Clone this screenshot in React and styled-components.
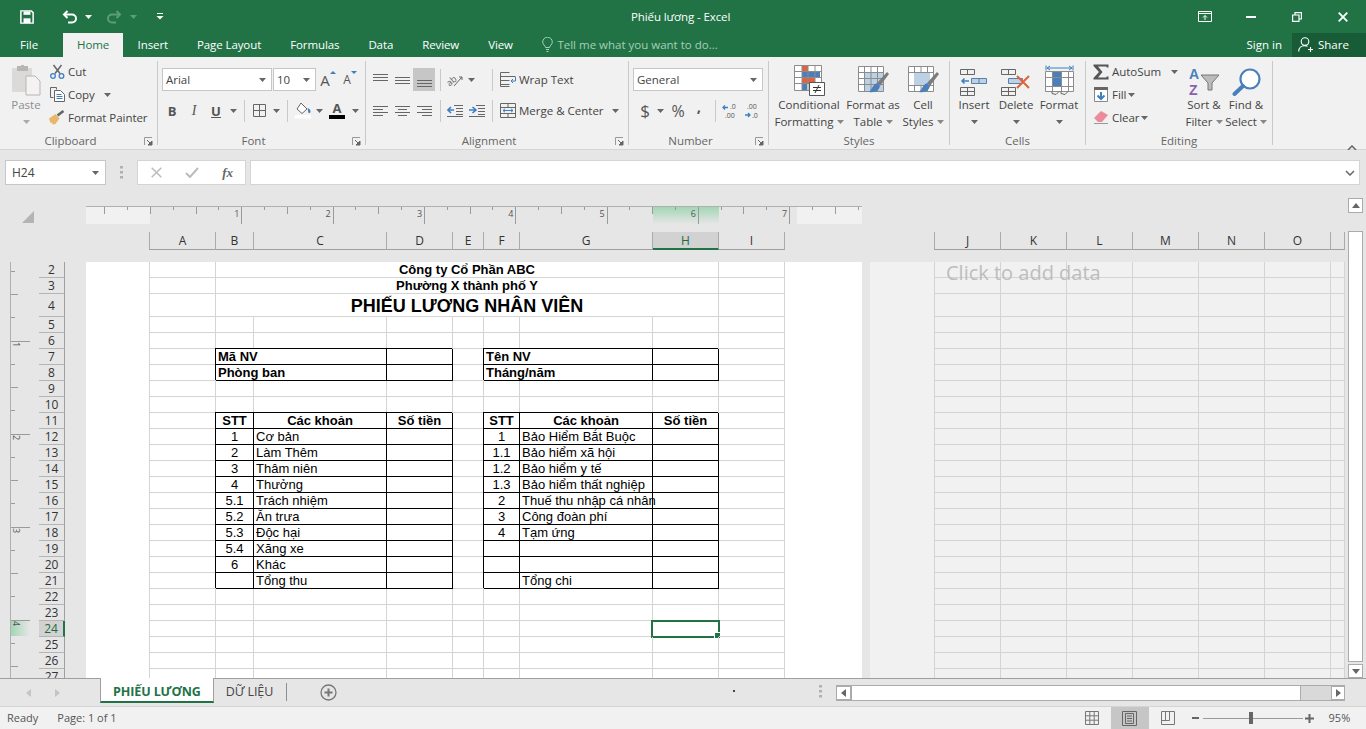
import React from "react";
import styled, { createGlobalStyle } from "styled-components";

const UI_FONT = '"Open Sans", "Noto Sans", sans-serif';
const GREEN = "#217346";

const GlobalStyle = createGlobalStyle`
  html, body { margin: 0; padding: 0; height: 100%; overflow: hidden; background: #e6e6e6; }
  body { font-family: ${UI_FONT}; }
  * { box-sizing: border-box; }
`;

const Window = styled.div`
  width: 1366px;
  height: 729px;
  display: flex;
  flex-direction: column;
  overflow: hidden;
  font-size: 12px;
  color: #444;
`;

/* ---------- title bar ---------- */
const TitleBar = styled.div`
  height: 33px;
  flex: none;
  background: ${GREEN};
  color: #fff;
  display: flex;
  align-items: center;
`;
const Qat = styled.div`
  width: 631px;
  flex: none;
  display: flex;
  align-items: center;
  padding-left: 20px;
`;
const QatSlot = styled.div`
  width: ${(p) => p.$w}px;
  margin-left: ${(p) => p.$ml || 0}px;
  flex: none;
  display: flex;
  justify-content: center;
  align-items: center;
`;
const Title = styled.div`
  width: 102px;
  flex: none;
  white-space: nowrap;
  font-size: 11.5px;
  letter-spacing: -0.1px;
`;
const WindowButtons = styled.div`
  margin-left: auto;
  display: flex;
`;
const WindowButton = styled.div`
  width: 46px;
  height: 33px;
  display: flex;
  align-items: center;
  justify-content: center;
`;

/* ---------- tabs ---------- */
const TabRow = styled.div`
  height: 24px;
  flex: none;
  background: ${GREEN};
  color: #fff;
  display: flex;
  align-items: stretch;
  font-size: 11.5px;
`;
const FileTab = styled.div`
  width: 63px;
  padding-left: 20px;
  line-height: 24px;
`;
const Tab = styled.div`
  padding: 0 ${(p) => (p.$active ? 14 : 14.5)}px;
  line-height: 23px;
  white-space: nowrap;
  letter-spacing: -0.1px;
  background: ${(p) => (p.$active ? "#f1f1f1" : "transparent")};
  color: ${(p) => (p.$active ? GREEN : "#fff")};
`;
const TellMe = styled.div`
  margin-left: 15px;
  padding-bottom: 2px;
  display: flex;
  align-items: center;
  gap: 4px;
  color: #a6cfb8;
  white-space: nowrap;
`;
const SignIn = styled.div`
  margin-left: auto;
  line-height: 23px;
  margin-right: 10px;
`;
const Share = styled.div`
  width: 74px;
  background: #185c37;
  display: flex;
  align-items: center;
  gap: 5px;
  padding: 0 0 1px 6px;
`;

/* ---------- ribbon ---------- */
const Ribbon = styled.div`
  height: 93px;
  flex: none;
  background: #f1f1f1;
  border-bottom: 1px solid #d6d6d6;
  display: flex;
  align-items: flex-start;
  padding-top: 4px;
`;
const Group = styled.div`
  width: ${(p) => p.$w}px;
  height: 84px;
  flex: none;
  display: flex;
  flex-direction: column;
  border-right: 1px solid #c8c8c8;
`;
const Body = styled.div`
  display: flex;
  margin-top: -1px;
`;
const GroupLabel = styled.div`
  position: relative;
  margin-top: auto;
  margin-bottom: -4px;
  height: 16px;
  line-height: 16px;
  text-align: center;
  font-size: 11.5px;
  color: #666;
  padding-right: ${(p) => (p.$launcher ? 16 : 0)}px;
`;
const Launcher = styled.svg`
  position: absolute;
  right: 4px;
  top: 4px;
`;
const BigButton = styled.div`
  width: ${(p) => p.$w}px;
  margin-left: ${(p) => p.$ml || 0}px;
  flex: none;
  display: flex;
  flex-direction: column;
  align-items: center;
  color: ${(p) => (p.$disabled ? "#8e8e8e" : "#444")};
`;
const BigIcon = styled.div`
  height: 36px;
  display: flex;
  align-items: flex-end;
`;
const BigLine = styled.div`
  height: 17px;
  line-height: 17px;
  white-space: nowrap;
  display: flex;
  align-items: center;
  font-size: 11.5px;
`;
const ActionCol = styled.div`
  display: flex;
  flex-direction: column;
  flex: none;
  width: ${(p) => p.$w}px;
  padding-left: ${(p) => p.$pl || 0}px;
`;
const ActionRow = styled.div`
  height: 23px;
  display: flex;
  align-items: center;
  white-space: nowrap;
  font-size: 11.5px;
  letter-spacing: -0.05px;
`;
const ActionIcon = styled.div`
  width: 20px;
  margin-right: 1px;
  flex: none;
  display: flex;
  justify-content: center;
  align-items: center;
`;
const Stack = styled.div`
  display: flex;
  flex-direction: column;
  gap: 8px;
  padding-top: 8px;
`;
const ToolRow = styled.div`
  display: flex;
  align-items: center;
  height: 23px;
  padding-left: ${(p) => p.$pl || 0}px;
`;
const Tool = styled.div`
  width: ${(p) => p.$w}px;
  height: 23px;
  flex: none;
  display: flex;
  align-items: center;
  justify-content: center;
  padding-bottom: ${(p) => p.$raise || 0}px;
  background: ${(p) => (p.$on ? "#c6c6c6" : "transparent")};
  font-family: ${(p) => (p.$serif ? '"Liberation Serif", serif' : "inherit")};
  font-weight: ${(p) => (p.$bold ? 700 : 400)};
  font-style: ${(p) => (p.$italic ? "italic" : "normal")};
  text-decoration: ${(p) => (p.$under ? "underline" : "none")};
  font-size: ${(p) => p.$fs || 12}px;
  color: #555;
`;
const Gap = styled.div`
  width: ${(p) => p.$w}px;
  flex: none;
`;
const Sep = styled.div`
  width: 1px;
  height: 22px;
  flex: none;
  background: #c8c8c8;
`;
const WideTool = styled.div`
  display: flex;
  align-items: center;
  padding-left: 7px;
  gap: 3px;
  white-space: nowrap;
  font-size: 11.5px;
`;
const Combo = styled.div`
  width: ${(p) => p.$w}px;
  height: 23px;
  margin-right: ${(p) => p.$mr || 0}px;
  flex: none;
  background: #fff;
  border: 1px solid #c6c6c6;
  display: flex;
  align-items: center;
  padding: 0 5px 0 3px;
  font-size: 11.5px;
`;
const CaretSvg = styled.svg`
  flex: none;
  margin-left: ${(p) => (p.$push ? "auto" : `${p.$ml || 0}px`)};
`;
const GrowA = styled.span`
  font-size: ${(p) => p.$fs}px;
  color: #555;
`;
const SizeArrow = styled.svg`
  flex: none;
  align-self: flex-start;
  margin-top: 3px;
`;
const Collapse = styled.div`
  margin-left: auto;
  margin-right: 9px;
  margin-top: 77px;
`;

/* ---------- formula bar ---------- */
const FormulaBar = styled.div`
  height: 56px;
  flex: none;
  background: #e6e6e6;
  display: flex;
  padding: 10px 6px 0 5px;
  align-items: flex-start;
`;
const NameBox = styled.div`
  width: 101px;
  height: 25px;
  background: #fff;
  border: 1px solid #c6c6c6;
  display: flex;
  align-items: center;
  padding: 0 6px;
  font-size: 12px;
`;
const GripBox = styled.div`
  width: 31px;
  height: 25px;
  display: flex;
  align-items: center;
  justify-content: center;
`;
const FxBox = styled.div`
  width: 109px;
  height: 25px;
  background: #fff;
  border: 1px solid #d4d4d4;
  display: flex;
  align-items: center;
  justify-content: space-between;
  padding: 0 12px 0 13px;
  margin-right: 4px;
`;
const FormulaInput = styled.div`
  flex: 1;
  height: 25px;
  background: #fff;
  border: 1px solid #d4d4d4;
  display: flex;
  align-items: center;
  justify-content: flex-end;
  padding-right: 4px;
`;
const FxText = styled.span`
  font-family: "Liberation Serif", serif;
  font-style: italic;
  font-weight: 700;
  font-size: 13px;
  color: #666;
`;

/* ---------- work area ---------- */
const Workspace = styled.div`
  flex: 1;
  min-height: 0;
  display: flex;
  background: #e6e6e6;
`;
const WorkGrid = styled.div`
  width: 1345px;
  flex: none;
  display: grid;
  grid-template-columns: 86px 776px 8px 475px;
  grid-template-rows: 26px 30px 416px;
`;
const Corner = styled.div`
  display: flex;
  padding: 5px 0 0 22px;
`;
const RulerWrap = styled.div`
  height: 18px;
`;
const HeaderStrip = styled.div`
  display: flex;
  align-items: flex-start;
  padding-left: ${(p) => p.$pl}px;
  overflow: hidden;
`;
const ColHead = styled.div`
  width: ${(p) => p.$w}px;
  height: 18px;
  flex: none;
  text-align: center;
  line-height: 17px;
  font-size: 12px;
  color: ${(p) => (p.$selected ? "#1d6b40" : "#333")};
  background: ${(p) => (p.$selected ? "#d2d2d2" : "transparent")};
  border-right: 1px solid #ababab;
  border-left: ${(p) => (p.$first ? "1px solid #ababab" : "none")};
  border-bottom: ${(p) => (p.$selected ? `2px solid ${GREEN}` : "1px solid #9f9f9f")};
`;
const LeftRail = styled.div`
  display: flex;
  overflow: hidden;
`;
const RowNumbers = styled.div`
  width: 26px;
  flex: none;
`;
const RowNumber = styled.div`
  height: ${(p) => p.$h}px;
  text-align: center;
  line-height: ${(p) => p.$h}px;
  font-size: 12px;
  color: ${(p) => (p.$selected ? "#1d6b40" : "#333")};
  background: ${(p) => (p.$selected ? "#d2d2d2" : "transparent")};
  border-bottom: 1px solid #b5b5b5;
  border-right: ${(p) => (p.$selected ? `2px solid ${GREEN}` : "1px solid #9f9f9f")};
`;
const Page = styled.div`
  background: #fff;
  overflow: hidden;
  padding-left: 63px;
`;
const SheetGrid = styled.div`
  display: grid;
  width: 636px;
  border-left: 1px solid #d4d4d4;
  grid-template-columns: ${(p) => p.$cols};
  grid-template-rows: ${(p) => p.$rows};
`;
const Cell = styled.div`
  position: relative;
  grid-column: span ${(p) => p.$span || 1};
  border-right: 1px solid ${(p) => (p.$box ? "#000" : "#d4d4d4")};
  border-bottom: 1px solid ${(p) => (p.$box ? "#000" : "#d4d4d4")};
  box-shadow: ${(p) => (p.$box ? "-1px -1px 0 #000" : "none")};
  font-family: "Liberation Sans", Arial, sans-serif;
  font-size: ${(p) => p.$fs || 13}px;
  font-weight: ${(p) => (p.$bold ? 700 : 400)};
  text-align: ${(p) => (p.$center ? "center" : "left")};
  color: #000;
  padding: 0 2px;
  line-height: ${(p) => p.$lh || 15}px;
  white-space: nowrap;
`;
const Selection = styled.div`
  position: absolute;
  left: -2px;
  top: -1px;
  right: -2px;
  bottom: -2px;
  border: 2px solid ${GREEN};
  &::after {
    content: "";
    position: absolute;
    right: -3px;
    bottom: -3px;
    width: 5px;
    height: 5px;
    background: ${GREEN};
    border: 1px solid #fff;
  }
`;
const Gutter = styled.div`
  background: #e6e6e6;
`;
const EmptyPage = styled.div`
  position: relative;
  background: #f1f1f1;
  overflow: hidden;
  padding-left: 64px;
`;
const AddData = styled.div`
  position: absolute;
  left: 76px;
  top: 0;
  font-size: 20px;
  line-height: 22px;
  color: #bdbdbd;
  white-space: nowrap;
`;
const EmptyGrid = styled.div`
  display: grid;
  grid-template-columns: 66px 66px 66px 66px 66px 66px 14px;
  grid-template-rows: ${(p) => p.$rows};
  border-left: 1px solid #d4d4d4;
`;
const EmptyCell = styled.div`
  border-right: 1px solid #d4d4d4;
  border-bottom: 1px solid #d4d4d4;
`;

/* ---------- scrollbar ---------- */
const VScroll = styled.div`
  width: 21px;
  flex: none;
  display: flex;
  flex-direction: column;
  padding: 0 3px 0;
  background: #e6e6e6;
`;
const ScrollBtn = styled.div`
  width: ${(p) => p.$w || 15}px;
  height: ${(p) => p.$h || 15}px;
  flex: none;
  margin-top: ${(p) => p.$mt || 0}px;
  background: #fff;
  border: 1px solid #ababab;
  display: flex;
  align-items: center;
  justify-content: center;
`;
const VThumb = styled.div`
  width: 15px;
  height: 432px;
  margin-top: 18px;
  background: #fff;
  border: 1px solid #ababab;
`;

/* ---------- sheet tabs ---------- */
const SheetTabs = styled.div`
  height: 28px;
  flex: none;
  background: #e6e6e6;
  border-top: 1px solid #9f9f9f;
  display: flex;
  align-items: flex-start;
`;
const TabNav = styled.div`
  width: 100px;
  height: 27px;
  flex: none;
  display: flex;
  align-items: center;
  gap: 24px;
  padding-left: 26px;
`;
const SheetTab = styled.div`
  height: ${(p) => (p.$active ? 25 : 26)}px;
  margin-top: ${(p) => (p.$active ? -1 : 0)}px;
  padding: 0 12px;
  flex: none;
  line-height: ${(p) => (p.$active ? 27 : 25)}px;
  white-space: nowrap;
  font-size: 12.5px;
  font-weight: ${(p) => (p.$active ? 700 : 400)};
  letter-spacing: -0.1px;
  color: ${(p) => (p.$active ? GREEN : "#444")};
  background: ${(p) => (p.$active ? "#fff" : "transparent")};
  border-left: ${(p) => (p.$active ? "1px solid #9f9f9f" : "none")};
  border-right: ${(p) => (p.$active ? "1px solid #9f9f9f" : "none")};
  border-bottom: ${(p) => (p.$active ? `2px solid ${GREEN}` : "none")};
`;
const TabDivider = styled.div`
  width: 1px;
  height: 18px;
  margin: 4px 0 0 1px;
  background: #8f8f8f;
  flex: none;
`;
const PlusWrap = styled.div`
  margin: 5px 0 0 33px;
  flex: none;
  display: flex;
`;
const StrayDot = styled.div`
  width: 2px;
  height: 2px;
  margin: 11px 0 0 396px;
  background: #444;
  flex: none;
`;
const GripWrap = styled.div`
  margin: 6px 14px 0 auto;
  display: flex;
`;
const HScroll = styled.div`
  width: 509px;
  height: 16px;
  margin: 6px 21px 0 0;
  flex: none;
  display: flex;
  background: #d9d9d9;
  border: 1px solid #ababab;
  border-left: none;
  border-right: none;
`;
const HThumb = styled.div`
  width: 450px;
  background: #fff;
  border-left: 1px solid #ababab;
  border-right: 1px solid #ababab;
`;

/* ---------- status ---------- */
const StatusBar = styled.div`
  height: 23px;
  flex: none;
  background: #f1f1f1;
  border-top: 1px solid #d4d4d4;
  display: flex;
  align-items: stretch;
  padding-left: 7px;
  font-size: 11px;
  color: #555;
`;
const StatusText = styled.div`
  line-height: 22px;
  margin-right: ${(p) => p.$mr || 0}px;
  white-space: nowrap;
`;
const ViewBtn = styled.div`
  width: ${(p) => p.$w}px;
  margin-left: ${(p) => p.$ml || 0}px;
  flex: none;
  display: flex;
  align-items: center;
  justify-content: center;
  background: ${(p) => (p.$on ? "#c6c6c6" : "transparent")};
`;
const Zoom = styled.div`
  display: flex;
  align-items: center;
  margin-left: 4px;
`;
const ZoomTrack = styled.div`
  position: relative;
  width: 100px;
  height: 1px;
  margin: 0 2px;
  background: #9a9a9a;
`;
const ZoomThumb = styled.div`
  position: absolute;
  left: 46px;
  top: -6px;
  width: 4px;
  height: 12px;
  background: #666;
`;
const ZoomSign = styled.div`
  width: 10px;
  display: flex;
  justify-content: center;
`;
const ZoomPct = styled.div`
  margin-left: 14px;
  line-height: 22px;
`;

/* ---------- icons ---------- */
const Caret = ({ ml, push, color = "#666" }) => (
  <CaretSvg width="7" height="4" viewBox="0 0 7 4" $ml={ml} $push={push}>
    <path d="M0 0h7L3.5 4z" fill={color} />
  </CaretSvg>
);
const LaunchIcon = () => (
  <Launcher width="9" height="9" viewBox="0 0 9 9">
    <path d="M.5 8V.5H8" fill="none" stroke="#999" />
    <path d="M3 3l4 4M8 4v4H4z" stroke="#666" fill="#666" strokeWidth="1" />
  </Launcher>
);
const Save = () => (
  <svg width="16" height="16" viewBox="0 0 16 16" fill="none" stroke="#fff">
    <path d="M1 1h12l2 2v12H1z" strokeWidth="1.7" />
    <path d="M4 1.500h8v4H4z" fill="#fff" strokeWidth="0" />
    <path d="M4 9.500h8V15H4z" fill="#fff" strokeWidth="0" />
  </svg>
);
const Undo = ({ flip, color = "#fff" }) => (
  <svg width="16" height="14" viewBox="0 0 16 14" fill="none" stroke={color} strokeWidth="2" transform={flip ? "scale(-1 1)" : undefined}>
    <path d="M5.500 1L2 4.500 5.500 8" />
    <path d="M2 4.500h8a3.800 3.800 0 0 1 0 8H6" />
  </svg>
);
const Customize = () => (
  <svg width="8" height="7" viewBox="0 0 8 7">
    <path d="M1 .5h6" stroke="#fff" />
    <path d="M.5 3h7L4 6.500z" fill="#fff" />
  </svg>
);
const RibbonDisplay = () => (
  <svg width="14" height="11" viewBox="0 0 14 11" fill="none" stroke="#fff">
    <path d="M.5.5h13v10H.5zM.5 2.500h13" />
    <path d="M7 9V4.500M5 6.500l2-2 2 2" />
  </svg>
);
const Minimize = () => (
  <svg width="10" height="2" viewBox="0 0 10 2"><path d="M0 1h10" stroke="#fff" strokeWidth="2" /></svg>
);
const Restore = () => (
  <svg width="10" height="10" viewBox="0 0 10 10" fill="none" stroke="#fff" strokeWidth="1.2">
    <path d="M.6 3h6.400v6.400H.6zM3 3V.6h6.400V7H7" />
  </svg>
);
const Close = () => (
  <svg width="10" height="10" viewBox="0 0 10 10"><path d="M.7.7l8.600 8.600M9.300.7L.7 9.300" stroke="#fff" strokeWidth="1.8" /></svg>
);
const Bulb = () => (
  <svg width="11" height="15" viewBox="0 0 11 15" fill="none" stroke="#a6cfb8">
    <path d="M3.500 10.500C3.300 8.500.7 7.800.7 5a4.800 4.800 0 0 1 9.600 0c0 2.800-2.600 3.500-2.800 5.500z" />
    <path d="M4 12.500h3M4.500 14.500h2" />
  </svg>
);
const Person = () => (
  <svg width="15" height="15" viewBox="0 0 15 15" fill="none" stroke="#fff" strokeWidth="1.1">
    <circle cx="7" cy="4.600" r="3.800" />
    <path d="M.7 14.500c0-3.600 2.600-5.800 6-5.800 1 0 2 .2 2.800.7M10 12.500h5M12.500 10v5" />
  </svg>
);
const Paste = () => (
  <svg width="30" height="31" viewBox="0 0 30 31">
    <path d="M1 3h20v24H1z" fill="#dcd9d9" />
    <path d="M6 1h4V0h3v1h4v5H6z" fill="#b8b5b5" />
    <path d="M15 11h9l5 5v14H15z" fill="#f4f2f2" stroke="#b8b5b5" />
  </svg>
);
const Cut = () => (
  <svg width="15" height="15" viewBox="0 0 15 15" fill="none">
    <path d="M5 9.500L11.500 1M10 9.500L3.500 1" stroke="#666" strokeWidth="1.5" />
    <circle cx="3" cy="12" r="2.300" stroke="#3d7fc0" strokeWidth="1.3" />
    <circle cx="11.500" cy="12" r="2.300" stroke="#3d7fc0" strokeWidth="1.3" />
  </svg>
);
const Copy = () => (
  <svg width="15" height="15" viewBox="0 0 15 15" fill="none" stroke="#666">
    <path d="M.5.5h6v2M.5.5v10h3" />
    <path d="M4.500 3.500h6l4 4v7h-10z" fill="#fff" />
    <path d="M6.500 7.500h5M6.500 9.500h6M6.500 11.500h6" stroke="#3d7fc0" />
  </svg>
);
const Painter = () => (
  <svg width="16" height="15" viewBox="0 0 16 15">
    <path d="M0 8.500L6.500 4l4 4.500L6.500 14 3 14.500 3.500 12.500 1.500 13z" fill="#e8b76a" />
    <path d="M8.500 5.500L14.500 1" stroke="#666" strokeWidth="2.6" />
  </svg>
);
const Borders = () => (
  <svg width="13" height="13" viewBox="0 0 13 13" fill="none" stroke="#666">
    <path d="M.5.5h12v12H.5zM6.500.5v12M.5 6.500h12" />
  </svg>
);
const FillColor = () => (
  <svg width="17" height="17" viewBox="0 0 17 17">
    <path d="M6 1l6 6-5 4.500L2 7z" fill="#fff" stroke="#666" />
    <path d="M12.500 6c1.500.5 3 1.500 3 3.500 0 1-.7 1.500-1.300 1.500s-1.200-.6-1-1.500z" fill="#3d7fc0" />
    <path d="M0 13h16v3.500H0z" fill="#fff" />
  </svg>
);
const FontColorBar = styled.span`
  display: flex;
  flex-direction: column;
  align-items: center;
  font-size: 13px;
  font-weight: 700;
  line-height: 13px;
  color: #555;
  &::after {
    content: "";
    width: 16px;
    height: 4px;
    background: #000;
  }
`;
const AlignLines = ({ rows }) => (
  <svg width="15" height="14" viewBox="0 0 15 14" stroke="#666">
    {rows.map(([a, b, y]) => (
      <path key={y} d={`M${a} ${y + 0.5}H${b}`} />
    ))}
  </svg>
);
const Orientation = () => (
  <svg width="18" height="16" viewBox="0 0 18 16" overflow="visible">
    <text x="1" y="12" fontSize="9" fill="#666" transform="rotate(-40 6 10)" fontFamily="Open Sans">ab</text>
    <path d="M8 14L16 5M13 5h3v3" fill="none" stroke="#666" />
  </svg>
);
const WrapIcon = () => (
  <svg width="16" height="15" viewBox="0 0 16 15" fill="none" stroke="#666">
    <path d="M.5.5h9M.5 4.500h15M.5 8.500h9M.5 12.500h9" />
    <path d="M.5.5v14h9" />
    <path d="M15.500 5v4h-4M13 7l-2 2 2 2" stroke="#3d7fc0" />
  </svg>
);
const MergeIcon = () => (
  <svg width="16" height="15" viewBox="0 0 16 15" fill="none" stroke="#666">
    <path d="M.5.5h15v14H.5zM.5 4.500h15M.5 10.500h15M8 .5v4M8 10.500v4" />
    <path d="M3 7.500h10M5 5.800L3 7.500l2 1.700M11 5.800l2 1.700-2 1.700" stroke="#3d7fc0" />
  </svg>
);
const Indent = ({ flip }) => (
  <svg width="16" height="12" viewBox="0 0 16 12" fill="none">
    <path d="M7 .5h9M9 3.500h7M9 6.500h7M9 9.500h7M0 11.500h16" stroke="#666" />
    <path d={flip ? "M7 5H1M4 2L1 5l3 3" : "M0 5h6M3.500 2L7 5 3.500 8"} stroke="#3d7fc0" strokeWidth="1.6" />
  </svg>
);
const Decimal = ({ inc }) => (
  <svg width="16" height="16" viewBox="0 0 16 16" fontSize="7" fontFamily="Open Sans" fill="#555" overflow="visible">
    <text x={inc ? 8 : 3} y="6">{inc ? ".0" : ".00"}</text>
    <text x={inc ? 3 : 8} y="15">{inc ? ".00" : ".0"}</text>
    <path d={inc ? "M6 4.500H1M3 2.500L1 4.500l2 2" : "M1 12h5M4 10l2 2-2 2"} fill="none" stroke="#3d7fc0" strokeWidth="1.3" />
  </svg>
);
const CondFormat = () => (
  <svg width="31" height="31" viewBox="0 0 31 31">
    <path d="M.5.5h27v25H.5z" fill="#fff" stroke="#8c8c8c" />
    <path d="M8 1h6v5H8z" fill="#e0633c" />
    <path d="M8 7h18v5H8z" fill="#4a7fbb" />
    <path d="M8 13h13v5H8z" fill="#e0633c" />
    <path d="M8 19h5v6H8z" fill="#4a7fbb" />
    <path d="M8 .5v25M14 .5v25M21 .5v25M.5 6.500h27M.5 12.500h27M.5 18.500h27" stroke="#8c8c8c" fill="none" />
    <path d="M15.500 17.500h15v13h-15z" fill="#fff" stroke="#555" />
    <path d="M19 22.500h8M19 25.500h8M25 20l-4 8" stroke="#333" fill="none" />
  </svg>
);
const TableBrush = ({ wide }) => (
  <svg width="31" height="30" viewBox="0 0 31 30">
    <path d="M.5.5h25v25H.5z" fill="#fff" stroke="#8c8c8c" />
    {wide ? <path d="M6 7h16v12H6z" fill="#bcd0e6" /> : <path d="M7 7h18v18H7z" fill="#bcd0e6" />}
    {wide ? (
      <path d="M.5 6.500h25M.5 19.500h25M6.500 .5v6M6.500 19.500v6M13 19.500v6M19.500 19.500v6M13 .5v6M19.500 .5v6" stroke="#8c8c8c" fill="none" />
    ) : (
      <path d="M.5 6.500h25M.5 12.500h25M.5 18.500h25M6.500 .5v25M13 .5v25M19.500 .5v25" stroke="#8c8c8c" fill="none" />
    )}
    <path d="M19 17L29 6l2 2-9 12z" fill="#7c7c7c" />
    <path d="M19 17l3 3c-1 4-4 7-11 6 3-2 3-7 8-9z" fill="#4a7fbb" />
  </svg>
);
const InsertCells = () => (
  <svg width="28" height="27" viewBox="0 0 28 27" fill="none" stroke="#666">
    <path d="M.5.5h14v5H.5zM7.500.5v5" />
    <path d="M11.500 9.500h15v5h-15zM19 9.500v5" fill="#bcd0e6" stroke="#5a7fa8" />
    <path d="M.5 18.500h14v8H.5zM7.500 18.500v8M.5 22.500h14" />
    <path d="M9 12H2M4.500 9.500L2 12l2.500 2.500" stroke="#3d7fc0" strokeWidth="1.5" />
  </svg>
);
const DeleteCells = () => (
  <svg width="31" height="27" viewBox="0 0 31 27" fill="none" stroke="#666">
    <path d="M.5.5h14v5H.5zM7.500.5v5" />
    <path d="M7.500 9.500h14v5h-14z" fill="#bcd0e6" stroke="#5a7fa8" />
    <path d="M.5 18.500h14v8H.5zM7.500 18.500v8M.5 22.500h14" />
    <path d="M16 7l12 12M28 7L16 19" stroke="#e0633c" strokeWidth="2" />
  </svg>
);
const FormatCells = () => (
  <svg width="29" height="31" viewBox="0 0 29 31" fill="none" stroke="#8c8c8c">
    <path d="M1 .5v5M28 .5v5M2 3h25M5 1L2 3l3 2M24 1l3 2-3 2" stroke="#3d7fc0" />
    <path d="M.5 6.500h28v20H.5z" fill="#fff" />
    <path d="M8 7h8v15H8z" fill="#4a7fbb" stroke="none" />
    <path d="M.5 12.500h28M.5 21.500h28M7.500 6.500v20M16.500 6.500v20M23.500 6.500v20" />
    <path d="M7 26.500v2l4 1 3-3M16 26.500v2l4 1 3-3" stroke="#666" />
  </svg>
);
const Sigma = () => (
  <svg width="16" height="16" viewBox="0 0 16 16"><path d="M.5.5h15v3h-2V2.500H5L9.500 8 5 13.500h8.500v-1h2v3H.5V14L6 8 .5 2z" fill="#555" /></svg>
);
const FillDown = () => (
  <svg width="14" height="15" viewBox="0 0 14 15" fill="none">
    <path d="M.5.5h13v14H.5z" stroke="#888" fill="#fff" />
    <path d="M.5.5h13v2H.5z" fill="#666" stroke="#666" />
    <path d="M7 5v7M3.500 8.500L7 12l3.500-3.500" stroke="#3d7fc0" strokeWidth="2" />
  </svg>
);
const Eraser = () => (
  <svg width="15" height="13" viewBox="0 0 15 13">
    <path d="M0 7l7-7 7 4-6 7H4z" fill="#ec8b9c" />
    <path d="M0 12.500h14" stroke="#999" />
  </svg>
);
const SortLetter = styled.text`
  font-family: "Liberation Sans", sans-serif;
  font-size: 14px;
  font-weight: 700;
`;
const SortFilter = () => (
  <svg width="32" height="29" viewBox="0 0 32 29" overflow="visible">
    <SortLetter x="1" y="12" fill="#4a7fbb">A</SortLetter>
    <SortLetter x="1" y="28" fill="#8c5fb0">Z</SortLetter>
    <path d="M13 8h18l-7 8v7h-4v-7z" fill="#bcbcbc" stroke="#777" />
  </svg>
);
const Magnifier = () => (
  <svg width="29" height="28" viewBox="0 0 29 28" fill="none">
    <circle cx="18" cy="11" r="9.500" stroke="#4a7fbb" strokeWidth="2.2" fill="#fff" />
    <path d="M11 18L2.500 26" stroke="#4a7fbb" strokeWidth="4" strokeLinecap="round" />
  </svg>
);
const Chevron = ({ up }) => (
  <svg width="10" height="6" viewBox="0 0 10 6" fill="none" stroke="#666" strokeWidth="1.5">
    <path d={up ? "M1 5l4-4 4 4" : "M1 1l4 4 4-4"} />
  </svg>
);
const Grip = () => (
  <svg width="3" height="13" viewBox="0 0 3 13" fill="#b0b0b0">
    <path d="M0 0h3v2.500H0zM0 5h3v2.500H0zM0 10h3v2.500H0z" />
  </svg>
);
const Cross = () => (
  <svg width="11" height="11" viewBox="0 0 11 11"><path d="M.7.7l9.600 9.600M10.300.7L.7 10.300" stroke="#bcbcbc" strokeWidth="1.500" /></svg>
);
const Check = () => (
  <svg width="14" height="11" viewBox="0 0 14 11"><path d="M1 6l4 4 8-9" fill="none" stroke="#bcbcbc" strokeWidth="2" /></svg>
);
const Triangle = () => (
  <svg width="12" height="12" viewBox="0 0 12 12"><path d="M12 0v12H0z" fill="#b4b4b4" /></svg>
);
const Arrow = ({ dir, color = "#666" }) => {
  const d = { up: "M0 5L4 0l4 5z", down: "M0 0l4 5 4-5z", left: "M5 0L0 4l5 4z", right: "M0 0l5 4-5 4z" }[dir];
  const w = dir === "up" || dir === "down" ? 8 : 5;
  const h = dir === "up" || dir === "down" ? 5 : 8;
  return (
    <svg width={w} height={h} viewBox={`0 0 ${w} ${h}`}><path d={d} fill={color} /></svg>
  );
};
const SizeUp = () => (
  <SizeArrow width="6" height="3" viewBox="0 0 6 3"><path d="M0 3L3 0l3 3z" fill="#3d7fc0" /></SizeArrow>
);
const SizeDown = () => (
  <SizeArrow width="6" height="3" viewBox="0 0 6 3"><path d="M0 0l3 3 3-3z" fill="#3d7fc0" /></SizeArrow>
);
const PlusCircle = () => (
  <svg width="17" height="17" viewBox="0 0 17 17" fill="none" stroke="#777">
    <circle cx="8.500" cy="8.500" r="7.500" strokeWidth="1.300" />
    <path d="M8.500 4.500v8M4.500 8.500h8" strokeWidth="2" />
  </svg>
);
const ViewNormal = () => (
  <svg width="14" height="14" viewBox="0 0 14 14" fill="none" stroke="#777">
    <path d="M.5.500h13v13H.5zM.5 4.800h13M.5 9.200h13M4.800.500v13M9.200.500v13" />
  </svg>
);
const ViewPage = () => (
  <svg width="15" height="15" viewBox="0 0 15 15" fill="none" stroke="#666">
    <path d="M.5.500h14v14H.5z" />
    <path d="M3.500 2.500h8v10h-8zM5 5h5M5 7.500h5M5 10h5" />
  </svg>
);
const ViewBreak = () => (
  <svg width="14" height="14" viewBox="0 0 14 14" fill="none" stroke="#777">
    <path d="M.5.500h13v13H.5zM.5 9.500h8M8.500.500v9M4.500.500v9" />
  </svg>
);
const MinusSign = () => (
  <svg width="7" height="2" viewBox="0 0 7 2"><path d="M0 1h7" stroke="#666" strokeWidth="2" /></svg>
);
const PlusSign = () => (
  <svg width="9" height="9" viewBox="0 0 9 9"><path d="M0 4.500h9M4.500 0v9" stroke="#666" strokeWidth="2" /></svg>
);

/* ---------- rulers ---------- */
const H_INCH = 91.3;
const V_INCH = 93;
const HRuler = () => {
  const ticks = [];
  for (let i = -2; i < 32; i++) {
    const x = 64 + (i * H_INCH) / 4;
    if (x > 775) continue;
    const long = i % 4 === 0 && i > 0;
    const half = i % 2 === 0;
    ticks.push(<path key={i} d={`M${Math.round(x) + 0.5} 1V${long ? 18 : half ? 8 : 4}`} stroke="#9a9a9a" />);
  }
  return (
    <svg width="776" height="18" viewBox="0 0 776 18">
      <defs>
        <linearGradient id="hg" x1="0" y1="0" x2="0" y2="1">
          <stop offset="0" stopColor="#a3d6b6" />
          <stop offset="1" stopColor="#e6e6e6" />
        </linearGradient>
      </defs>
      <rect x="0" y="1" width="64" height="17" fill="#f1f1f1" />
      <rect x="711" y="1" width="65" height="17" fill="#f1f1f1" />
      <rect x="567" y="1" width="66" height="17" fill="url(#hg)" />
      <path d="M0 .5H776" stroke="#b0b0b0" />
      {ticks}
      {[1, 2, 3, 4, 5, 6, 7].map((n) => (
        <text key={n} x={64 + n * H_INCH - 7} y="11" fontSize="9" fill="#555" fontFamily="Open Sans">{n}</text>
      ))}
    </svg>
  );
};
const VRuler = () => {
  const ticks = [];
  for (let i = -3; i < 16; i++) {
    const y = 78.7 + (i * V_INCH) / 4;
    const end = i % 4 === 0 ? 30 : i % 2 === 0 ? 18 : 15;
    ticks.push(<path key={i} d={`M11 ${Math.round(y) + 0.5}H${end}`} stroke="#9a9a9a" />);
  }
  return (
    <svg width="39" height="416" viewBox="0 0 39 416">
      <defs>
        <linearGradient id="vg" x1="0" y1="0" x2="1" y2="0">
          <stop offset="0" stopColor="#a3d6b6" />
          <stop offset="1" stopColor="#e6e6e6" />
        </linearGradient>
      </defs>
      <rect x="11" y="358" width="19" height="16" fill="url(#vg)" />
      <path d="M10.500 0V416" stroke="#b0b0b0" />
      {ticks}
      {[1, 2, 3, 4].map((n) => (
        <text key={n} x="0" y="0" fontSize="9" fill="#555" fontFamily="Open Sans" transform={`translate(13 ${78 + (n - 1) * V_INCH + 2}) rotate(90)`}>{n}</text>
      ))}
    </svg>
  );
};

/* ---------- sheet data ---------- */
const COLS = [["A", 66], ["B", 38], ["C", 133], ["D", 66], ["E", 31], ["F", 36], ["G", 133], ["H", 66], ["I", 66]];
const RIGHT_COLS = [["J", 66], ["K", 66], ["L", 66], ["M", 66], ["N", 66], ["O", 66], ["", 14]];
const ROW_NUMBERS = Array.from({ length: 26 }, (_, i) => i + 2);
const rowHeight = (n) => (n === 4 ? 23 : 16);
const ROW_TEMPLATE = ROW_NUMBERS.map((n) => `${rowHeight(n)}px`).join(" ");
const COL_TEMPLATE = COLS.map(([, w]) => `${w}px`).join(" ");

const infoRow = (a, b) => ({
  B: { t: a, span: 2, bold: true, box: true },
  D: { box: true },
  F: { t: b, span: 2, bold: true, box: true },
  H: { box: true },
});
const moneyRow = (no1, name1, no2, name2, bold) => ({
  B: { t: no1, center: true, box: true, bold },
  C: { t: name1, box: true, bold, center: bold },
  D: { box: true, t: bold ? "Số tiền" : undefined, bold, center: bold },
  F: { t: no2, center: true, box: true, bold },
  G: { t: name2, box: true, bold, center: bold },
  H: { box: true, t: bold ? "Số tiền" : undefined, bold, center: bold },
});
const SHEET = {
  2: { B: { t: "Công ty Cổ Phần ABC", span: 7, bold: true, center: true } },
  3: { B: { t: "Phường X thành phố Y", span: 7, bold: true, center: true } },
  4: { B: { t: "PHIẾU LƯƠNG NHÂN VIÊN", span: 7, bold: true, center: true, fs: 18, lh: 25 } },
  7: infoRow("Mã NV", "Tên NV"),
  8: infoRow("Phòng ban", "Tháng/năm"),
  11: moneyRow("STT", "Các khoản", "STT", "Các khoản", true),
  12: moneyRow("1", "Cơ bản", "1", "Bảo Hiểm Bắt Buộc"),
  13: moneyRow("2", "Làm Thêm", "1.1", "Bảo hiểm xã hội"),
  14: moneyRow("3", "Thâm niên", "1.2", "Bảo hiểm y tế"),
  15: moneyRow("4", "Thưởng", "1.3", "Bảo hiểm thất nghiệp"),
  16: moneyRow("5.1", "Trách nhiệm", "2", "Thuế thu nhập cá nhân"),
  17: moneyRow("5.2", "Ăn trưa", "3", "Công đoàn phí"),
  18: moneyRow("5.3", "Độc hại", "4", "Tạm ứng"),
  19: moneyRow("5.4", "Xăng xe", "", ""),
  20: moneyRow("6", "Khác", "", ""),
  21: moneyRow("", "Tổng thu", "", "Tổng chi"),
};

const SheetRows = () => {
  const out = [];
  ROW_NUMBERS.forEach((row) => {
    let skip = 0;
    COLS.forEach(([col]) => {
      if (skip > 0) {
        skip -= 1;
        return;
      }
      const c = (SHEET[row] && SHEET[row][col]) || {};
      if (c.span) skip = c.span - 1;
      const selected = row === 24 && col === "H";
      out.push(
        <Cell key={row + col} $span={c.span} $box={c.box} $bold={c.bold} $center={c.center} $fs={c.fs} $lh={c.lh}>
          {c.t}
          {selected && <Selection />}
        </Cell>
      );
    });
  });
  return out;
};

const App = () => (
  <Window>
    <GlobalStyle />
    <TitleBar>
      <Qat>
        <QatSlot $w={14}><Save /></QatSlot>
        <QatSlot $w={16} $ml={28}><Undo /></QatSlot>
        <QatSlot $w={20}><Caret color="#fff" /></QatSlot>
        <QatSlot $w={16} $ml={8}><Undo flip color="#5d9c79" /></QatSlot>
        <QatSlot $w={22}><Caret color="#5d9c79" /></QatSlot>
        <QatSlot $w={8} $ml={12}><Customize /></QatSlot>
      </Qat>
      <Title>Phiếu lương - Excel</Title>
      <WindowButtons>
        <WindowButton><RibbonDisplay /></WindowButton>
        <WindowButton><Minimize /></WindowButton>
        <WindowButton><Restore /></WindowButton>
        <WindowButton><Close /></WindowButton>
      </WindowButtons>
    </TitleBar>

    <TabRow>
      <FileTab>File</FileTab>
      <Tab $active>Home</Tab>
      <Tab>Insert</Tab>
      <Tab>Page Layout</Tab>
      <Tab>Formulas</Tab>
      <Tab>Data</Tab>
      <Tab>Review</Tab>
      <Tab>View</Tab>
      <TellMe><Bulb />Tell me what you want to do...</TellMe>
      <SignIn>Sign in</SignIn>
      <Share><Person />Share</Share>
    </TabRow>

    <Ribbon>
      <Group $w={158}>
        <Body>
          <BigButton $w={36} $ml={8} $disabled>
            <BigIcon><Paste /></BigIcon>
            <BigLine>Paste</BigLine>
            <BigLine><Caret color="#aaa" /></BigLine>
          </BigButton>
          <ActionCol $w={110} $pl={3}>
            <ActionRow><ActionIcon><Cut /></ActionIcon>Cut</ActionRow>
            <ActionRow><ActionIcon><Copy /></ActionIcon>Copy<Caret ml={9} /></ActionRow>
            <ActionRow><ActionIcon><Painter /></ActionIcon>Format Painter</ActionRow>
          </ActionCol>
        </Body>
        <GroupLabel $launcher>Clipboard<LaunchIcon /></GroupLabel>
      </Group>

      <Group $w={208}>
        <Body>
          <Stack>
            <ToolRow $pl={4}>
              <Combo $w={110} $mr={1}>Arial<Caret push /></Combo>
              <Combo $w={43}>10<Caret push /></Combo>
              <Tool $w={24}><GrowA $fs={15}>A</GrowA><SizeUp /></Tool>
              <Tool $w={20}><GrowA $fs={12}>A</GrowA><SizeDown /></Tool>
            </ToolRow>
            <ToolRow $pl={3}>
              <Tool $w={22} $bold $fs={13}>B</Tool>
              <Tool $w={22} $italic $serif $fs={14}>I</Tool>
              <Tool $w={22} $under $bold $fs={13}>U</Tool>
              <Tool $w={12}><Caret /></Tool>
              <Gap $w={5} />
              <Sep />
              <Tool $w={28}><Borders /></Tool>
              <Tool $w={6}><Caret /></Tool>
              <Gap $w={8} />
              <Sep />
              <Gap $w={2} />
              <Tool $w={26}><FillColor /></Tool>
              <Tool $w={6}><Caret /></Tool>
              <Tool $w={30}><FontColorBar>A</FontColorBar></Tool>
              <Tool $w={6}><Caret /></Tool>
            </ToolRow>
          </Stack>
        </Body>
        <GroupLabel $launcher>Font<LaunchIcon /></GroupLabel>
      </Group>

      <Group $w={263}>
        <Body>
          <Stack>
            <ToolRow $pl={4}>
              <Tool $w={21}><AlignLines rows={[[0, 15, 1], [0, 15, 4], [0, 15, 7]]} /></Tool>
              <Tool $w={22}><AlignLines rows={[[0, 15, 4], [0, 15, 7], [0, 15, 10]]} /></Tool>
              <Tool $w={22} $on><AlignLines rows={[[0, 15, 7], [0, 15, 10], [0, 15, 13]]} /></Tool>
              <Gap $w={5} />
              <Sep />
              <Tool $w={28}><Orientation /></Tool>
              <Tool $w={4}><Caret /></Tool>
              <Gap $w={19} />
              <Sep />
              <WideTool><WrapIcon />Wrap Text</WideTool>
            </ToolRow>
            <ToolRow $pl={4}>
              <Tool $w={21}><AlignLines rows={[[0, 15, 2], [0, 10, 5], [0, 15, 8], [0, 10, 11]]} /></Tool>
              <Tool $w={22}><AlignLines rows={[[0, 15, 2], [3, 12, 5], [0, 15, 8], [3, 12, 11]]} /></Tool>
              <Tool $w={22}><AlignLines rows={[[0, 15, 2], [5, 15, 5], [0, 15, 8], [5, 15, 11]]} /></Tool>
              <Gap $w={5} />
              <Sep />
              <Gap $w={3} />
              <Tool $w={22}><Indent flip /></Tool>
              <Tool $w={22}><Indent /></Tool>
              <Gap $w={4} />
              <Sep />
              <WideTool><MergeIcon />Merge &amp; Center<Caret ml={5} /></WideTool>
            </ToolRow>
          </Stack>
        </Body>
        <GroupLabel $launcher>Alignment<LaunchIcon /></GroupLabel>
      </Group>

      <Group $w={140}>
        <Body>
          <Stack>
            <ToolRow $pl={4}>
              <Combo $w={130}>General<Caret push /></Combo>
            </ToolRow>
            <ToolRow $pl={4}>
              <Tool $w={24} $fs={17}>$</Tool>
              <Tool $w={6}><Caret /></Tool>
              <Tool $w={30} $fs={16}>%</Tool>
              <Tool $w={12} $fs={15} $bold $raise={9}>,</Tool>
              <Gap $w={10} />
              <Sep />
              <Gap $w={3} />
              <Tool $w={22}><Decimal inc /></Tool>
              <Tool $w={22}><Decimal /></Tool>
            </ToolRow>
          </Stack>
        </Body>
        <GroupLabel $launcher>Number<LaunchIcon /></GroupLabel>
      </Group>

      <Group $w={181}>
        <Body>
          <BigButton $w={74} $ml={3}>
            <BigIcon><CondFormat /></BigIcon>
            <BigLine>Conditional</BigLine>
            <BigLine>Formatting<Caret ml={3} color="#888" /></BigLine>
          </BigButton>
          <BigButton $w={54}>
            <BigIcon><TableBrush /></BigIcon>
            <BigLine>Format as</BigLine>
            <BigLine>Table<Caret ml={3} color="#888" /></BigLine>
          </BigButton>
          <BigButton $w={46}>
            <BigIcon><TableBrush wide /></BigIcon>
            <BigLine>Cell</BigLine>
            <BigLine>Styles<Caret ml={3} color="#888" /></BigLine>
          </BigButton>
        </Body>
        <GroupLabel>Styles</GroupLabel>
      </Group>

      <Group $w={136}>
        <Body>
          <BigButton $w={42} $ml={3}>
            <BigIcon><InsertCells /></BigIcon>
            <BigLine>Insert</BigLine>
            <BigLine><Caret /></BigLine>
          </BigButton>
          <BigButton $w={42}>
            <BigIcon><DeleteCells /></BigIcon>
            <BigLine>Delete</BigLine>
            <BigLine><Caret /></BigLine>
          </BigButton>
          <BigButton $w={44}>
            <BigIcon><FormatCells /></BigIcon>
            <BigLine>Format</BigLine>
            <BigLine><Caret /></BigLine>
          </BigButton>
        </Body>
        <GroupLabel>Cells</GroupLabel>
      </Group>

      <Group $w={187}>
        <Body>
          <ActionCol $w={96} $pl={5}>
            <ActionRow><ActionIcon><Sigma /></ActionIcon>AutoSum<Caret ml={10} /></ActionRow>
            <ActionRow><ActionIcon><FillDown /></ActionIcon>Fill<Caret ml={2} /></ActionRow>
            <ActionRow><ActionIcon><Eraser /></ActionIcon>Clear<Caret ml={2} /></ActionRow>
          </ActionCol>
          <BigButton $w={44}>
            <BigIcon><SortFilter /></BigIcon>
            <BigLine>Sort &amp;</BigLine>
            <BigLine>Filter<Caret ml={3} color="#888" /></BigLine>
          </BigButton>
          <BigButton $w={40}>
            <BigIcon><Magnifier /></BigIcon>
            <BigLine>Find &amp;</BigLine>
            <BigLine>Select<Caret ml={3} color="#888" /></BigLine>
          </BigButton>
        </Body>
        <GroupLabel>Editing</GroupLabel>
      </Group>

      <Collapse><Chevron up /></Collapse>
    </Ribbon>

    <FormulaBar>
      <NameBox>H24<Caret push /></NameBox>
      <GripBox><Grip /></GripBox>
      <FxBox><Cross /><Check /><FxText>fx</FxText></FxBox>
      <FormulaInput><Chevron /></FormulaInput>
    </FormulaBar>

    <Workspace>
      <WorkGrid>
        <Corner><Triangle /></Corner>
        <RulerWrap><HRuler /></RulerWrap>
        <div />
        <div />

        <div />
        <HeaderStrip $pl={63}>
          {COLS.map(([c, w], i) => (
            <ColHead key={c} $w={i === 0 ? w + 1 : w} $first={i === 0} $selected={c === "H"}>{c}</ColHead>
          ))}
        </HeaderStrip>
        <div />
        <HeaderStrip $pl={64}>
          {RIGHT_COLS.map(([c, w], i) => (
            <ColHead key={c || "end"} $w={i === 0 ? w + 1 : w} $first={i === 0}>{c}</ColHead>
          ))}
        </HeaderStrip>

        <LeftRail>
          <VRuler />
          <RowNumbers>
            {ROW_NUMBERS.map((n) => (
              <RowNumber key={n} $h={rowHeight(n)} $selected={n === 24}>{n}</RowNumber>
            ))}
          </RowNumbers>
        </LeftRail>
        <Page>
          <SheetGrid $cols={COL_TEMPLATE} $rows={ROW_TEMPLATE}>
            <SheetRows />
          </SheetGrid>
        </Page>
        <Gutter />
        <EmptyPage>
          <EmptyGrid $rows={ROW_TEMPLATE}>
            {ROW_NUMBERS.flatMap((n) => RIGHT_COLS.map(([c]) => <EmptyCell key={n + c} />))}
          </EmptyGrid>
          <AddData>Click to add data</AddData>
        </EmptyPage>
      </WorkGrid>
      <VScroll>
        <ScrollBtn $mt={-8}><Arrow dir="up" /></ScrollBtn>
        <VThumb />
        <ScrollBtn $mt={2} $h={14}><Arrow dir="down" /></ScrollBtn>
      </VScroll>
    </Workspace>

    <SheetTabs>
      <TabNav>
        <Arrow dir="left" color="#c4c4c4" />
        <Arrow dir="right" color="#c4c4c4" />
      </TabNav>
      <SheetTab $active>PHIẾU LƯƠNG</SheetTab>
      <SheetTab>DỮ LIỆU</SheetTab>
      <TabDivider />
      <PlusWrap><PlusCircle /></PlusWrap>
      <StrayDot />
      <GripWrap><Grip /></GripWrap>
      <HScroll>
        <ScrollBtn $h={14}><Arrow dir="left" /></ScrollBtn>
        <HThumb />
        <Gap $w={30} />
        <ScrollBtn $h={14} $w={14}><Arrow dir="right" /></ScrollBtn>
      </HScroll>
    </SheetTabs>

    <StatusBar>
      <StatusText $mr={19}>Ready</StatusText>
      <StatusText>Page: 1 of 1</StatusText>
      <ViewBtn $w={38} $ml={956}><ViewNormal /></ViewBtn>
      <ViewBtn $w={38} $on><ViewPage /></ViewBtn>
      <ViewBtn $w={38}><ViewBreak /></ViewBtn>
      <Zoom>
        <ZoomSign><MinusSign /></ZoomSign>
        <ZoomTrack><ZoomThumb /></ZoomTrack>
        <ZoomSign><PlusSign /></ZoomSign>
      </Zoom>
      <ZoomPct>95%</ZoomPct>
    </StatusBar>
  </Window>
);

export default App;
